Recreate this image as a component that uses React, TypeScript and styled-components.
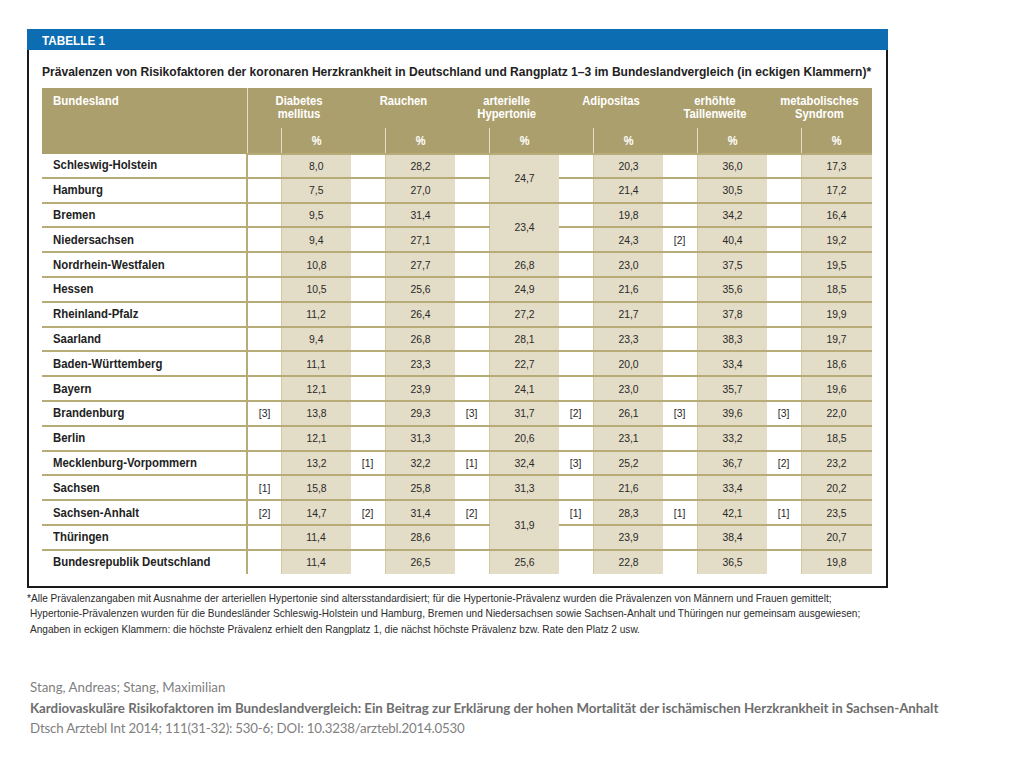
import React from "react";
import styled, { createGlobalStyle } from "styled-components";

const Global = createGlobalStyle`
  html, body { margin: 0; padding: 0; background: #ffffff; }
  body { font-family: "Liberation Sans", Arial, sans-serif; }
`;

const SANS = `"Liberation Sans", Arial, sans-serif`;
const LINE = "#b7ac77";
const HEAD = "#ac9f6e";
const TAN = "#e3dcc6";

const Page = styled.div`
  padding-top: 29px;
  padding-left: 27px;
`;

const Frame = styled.div`
  width: 861px;
  display: flex;
  flex-direction: column;
`;

/* emulates the condensed face of the original print font */
const Cond = styled.span<{ $origin?: string; $sx?: number }>`
  display: inline-block;
  white-space: nowrap;
  transform: scaleX(${(p) => p.$sx ?? 0.88});
  transform-origin: ${(p) => p.$origin || "center"} center;
`;

const BlueBar = styled.div`
  height: 21px;
  background: #0c6db3;
  display: flex;
  align-items: center;
  padding-left: 15px;
  padding-top: 2px;
  box-sizing: border-box;
  font-family: ${SANS};
  font-weight: bold;
  font-size: 13.5px;
  color: #ffffff;
`;

const Body = styled.div`
  border: 2px solid #1a1a1a;
  border-top: none;
  padding: 14px 14px 12px 13px;
`;

const Title = styled.div`
  font-family: ${SANS};
  font-weight: bold;
  font-size: 13.4px;
  color: #222222;
  white-space: nowrap;
  height: 16px;
  line-height: 16px;
  margin-bottom: 8px;
`;

const Table = styled.table`
  width: 830px;
  border-collapse: collapse;
  table-layout: fixed;
  font-family: ${SANS};
`;

const HeadCell = styled.th<{ $align?: string; $divider?: boolean; $h?: number }>`
  background: ${HEAD};
  color: #ffffff;
  font-weight: bold;
  font-size: 12.5px;
  line-height: 13px;
  text-align: ${(p) => p.$align || "center"};
  vertical-align: top;
  padding: ${(p) => (p.$align === "left" ? "7px 0 0 11px" : "7px 0 0 0")};
  height: ${(p) => p.$h || 40}px;
  border-left: ${(p) => (p.$divider ? "1px solid #e4dcc4" : "none")};
  box-sizing: border-box;
`;

const PctCell = styled.th<{ $divider?: boolean }>`
  background: ${HEAD};
  color: #ffffff;
  font-weight: bold;
  font-size: 12.5px;
  text-align: center;
  vertical-align: middle;
  padding: 0;
  height: 25px;
  border-left: ${(p) => (p.$divider ? "1px solid #e4dcc4" : "none")};
`;

const Row = styled.tr<{ $first?: boolean }>`
  border-top: ${(p) => (p.$first ? "none" : `2px solid ${LINE}`)};
`;

const NameCell = styled.td`
  height: 22.8px;
  padding: 0 0 0 11px;
  font-weight: bold;
  font-size: 12.5px;
  color: #222222;
  white-space: nowrap;
  border-right: 2px solid ${LINE};
  background: #ffffff;
`;

const RankCell = styled.td`
  padding: 0;
  text-align: center;
  font-size: 11.8px;
  color: #2a2a2a;
  background: #ffffff;
  border-top: 2px solid ${LINE};
`;

const ValueCell = styled.td`
  padding: 0;
  text-align: center;
  vertical-align: middle;
  font-size: 11.8px;
  color: #2a2a2a;
  background: ${TAN};
  border-left: 1px solid #d2c9a6;
  border-top: 2px solid ${LINE};
`;

const Footnote = styled.div`
  margin-top: 3px;
  padding-left: 3px;
  font-family: ${SANS};
  font-size: 10.1px;
  line-height: 15.5px;
  color: #2b2b2b;
  white-space: nowrap;
`;

const FootLine = styled.div<{ $star?: boolean }>`
  text-indent: ${(p) => (p.$star ? "-3px" : "0")};
`;

const Citation = styled.div`
  margin-top: 40px;
  padding-left: 3px;
  font-family: Lato, "Open Sans", sans-serif;
  font-size: 13.3px;
  line-height: 20.5px;
  color: #7f7f7f;
  white-space: nowrap;
`;

const CiteLine = styled.div<{ $bold?: boolean; $tight?: boolean }>`
  font-weight: ${(p) => (p.$bold ? "bold" : "normal")};
  color: ${(p) => (p.$bold ? "#6e6e6e" : "#7f7f7f")};
  letter-spacing: ${(p) => (p.$tight ? "-0.2px" : "normal")};
`;

type Cell = { r?: string; v: string | null; span?: number };
type RowData = { name: string; cells: Cell[] };

const groups = [
  ["Diabetes", "mellitus"],
  ["Rauchen"],
  ["arterielle", "Hypertonie"],
  ["Adipositas"],
  ["erhöhte", "Taillenweite"],
  ["metabolisches", "Syndrom"],
];

const c = (v: string | null, r?: string, span?: number): Cell => ({ v, r, span });

const rows: RowData[] = [
  { name: "Schleswig-Holstein", cells: [c("8,0"), c("28,2"), c("24,7", undefined, 2), c("20,3"), c("36,0"), c("17,3")] },
  { name: "Hamburg", cells: [c("7,5"), c("27,0"), c(null), c("21,4"), c("30,5"), c("17,2")] },
  { name: "Bremen", cells: [c("9,5"), c("31,4"), c("23,4", undefined, 2), c("19,8"), c("34,2"), c("16,4")] },
  { name: "Niedersachsen", cells: [c("9,4"), c("27,1"), c(null), c("24,3"), c("40,4", "[2]"), c("19,2")] },
  { name: "Nordrhein-Westfalen", cells: [c("10,8"), c("27,7"), c("26,8"), c("23,0"), c("37,5"), c("19,5")] },
  { name: "Hessen", cells: [c("10,5"), c("25,6"), c("24,9"), c("21,6"), c("35,6"), c("18,5")] },
  { name: "Rheinland-Pfalz", cells: [c("11,2"), c("26,4"), c("27,2"), c("21,7"), c("37,8"), c("19,9")] },
  { name: "Saarland", cells: [c("9,4"), c("26,8"), c("28,1"), c("23,3"), c("38,3"), c("19,7")] },
  { name: "Baden-Württemberg", cells: [c("11,1"), c("23,3"), c("22,7"), c("20,0"), c("33,4"), c("18,6")] },
  { name: "Bayern", cells: [c("12,1"), c("23,9"), c("24,1"), c("23,0"), c("35,7"), c("19,6")] },
  { name: "Brandenburg", cells: [c("13,8", "[3]"), c("29,3"), c("31,7", "[3]"), c("26,1", "[2]"), c("39,6", "[3]"), c("22,0", "[3]")] },
  { name: "Berlin", cells: [c("12,1"), c("31,3"), c("20,6"), c("23,1"), c("33,2"), c("18,5")] },
  { name: "Mecklenburg-Vorpommern", cells: [c("13,2"), c("32,2", "[1]"), c("32,4", "[1]"), c("25,2", "[3]"), c("36,7"), c("23,2", "[2]")] },
  { name: "Sachsen", cells: [c("15,8", "[1]"), c("25,8"), c("31,3"), c("21,6"), c("33,4"), c("20,2")] },
  { name: "Sachsen-Anhalt", cells: [c("14,7", "[2]"), c("31,4", "[2]"), c("31,9", "[2]", 2), c("28,3", "[1]"), c("42,1", "[1]"), c("23,5", "[1]")] },
  { name: "Thüringen", cells: [c("11,4"), c("28,6"), c(null), c("23,9"), c("38,4"), c("20,7")] },
  { name: "Bundesrepublik Deutschland", cells: [c("11,4"), c("26,5"), c("25,6"), c("22,8"), c("36,5"), c("19,8")] },
];

export default function App() {
  return (
    <Page>
      <Global />
      <Frame>
        <BlueBar>
          <Cond $origin="left" $sx={0.87}>TABELLE 1</Cond>
        </BlueBar>
        <Body>
          <Title>
            <Cond $origin="left" $sx={0.9}>
              Prävalenzen von Risikofaktoren der koronaren Herzkrankheit in Deutschland und Rangplatz 1–3 im Bundeslandvergleich (in eckigen Klammern)*
            </Cond>
          </Title>
          <Table>
            <colgroup>
              <col style={{ width: 205 }} />
              {groups.map((_, i) => (
                <React.Fragment key={i}>
                  <col style={{ width: 34 }} />
                  <col style={{ width: i === 5 ? 71 : 70 }} />
                </React.Fragment>
              ))}
            </colgroup>
            <thead>
              <tr>
                <HeadCell $align="left" rowSpan={2} $h={65}>
                  <Cond $origin="left" $sx={0.92}>Bundesland</Cond>
                </HeadCell>
                {groups.map((g, i) => (
                  <HeadCell key={i} colSpan={2} $divider={i === 0}>
                    <Cond $sx={0.9}>
                      {g.map((l, j) => (
                        <div key={j}>{l}</div>
                      ))}
                    </Cond>
                  </HeadCell>
                ))}
              </tr>
              <tr>
                {groups.map((_, i) => (
                  <React.Fragment key={i}>
                    <PctCell $divider={i === 0} />
                    <PctCell $divider>
                      <Cond>%</Cond>
                    </PctCell>
                  </React.Fragment>
                ))}
              </tr>
            </thead>
            <tbody>
              {rows.map((row, ri) => (
                <Row key={ri} $first={ri === 0}>
                  <NameCell>
                    <Cond $origin="left" $sx={0.91}>{row.name}</Cond>
                  </NameCell>
                  {row.cells.map((cell, ci) => (
                    <React.Fragment key={ci}>
                      <RankCell>{cell.r ? <Cond>{cell.r}</Cond> : null}</RankCell>
                      {cell.v !== null && (
                        <ValueCell rowSpan={cell.span || 1}>
                          <Cond>{cell.v}</Cond>
                        </ValueCell>
                      )}
                    </React.Fragment>
                  ))}
                </Row>
              ))}
            </tbody>
          </Table>
        </Body>
      </Frame>
      <Footnote>
        <FootLine $star>
          *Alle Prävalenzangaben mit Ausnahme der arteriellen Hypertonie sind altersstandardisiert; für die Hypertonie-Prävalenz wurden die Prävalenzen von Männern und Frauen gemittelt;
        </FootLine>
        <FootLine>
          Hypertonie-Prävalenzen wurden für die Bundesländer Schleswig-Holstein und Hamburg, Bremen und Niedersachsen sowie Sachsen-Anhalt und Thüringen nur gemeinsam ausgewiesen;
        </FootLine>
        <FootLine>
          Angaben in eckigen Klammern: die höchste Prävalenz erhielt den Rangplatz 1, die nächst höchste Prävalenz bzw. Rate den Platz 2 usw.
        </FootLine>
      </Footnote>
      <Citation>
        <CiteLine>Stang, Andreas; Stang, Maximilian</CiteLine>
        <CiteLine $bold>
          Kardiovaskuläre Risikofaktoren im Bundeslandvergleich: Ein Beitrag zur Erklärung der hohen Mortalität der ischämischen Herzkrankheit in Sachsen-Anhalt
        </CiteLine>
        <CiteLine $tight>Dtsch Arztebl Int 2014; 111(31-32): 530-6; DOI: 10.3238/arztebl.2014.0530</CiteLine>
      </Citation>
    </Page>
  );
}
